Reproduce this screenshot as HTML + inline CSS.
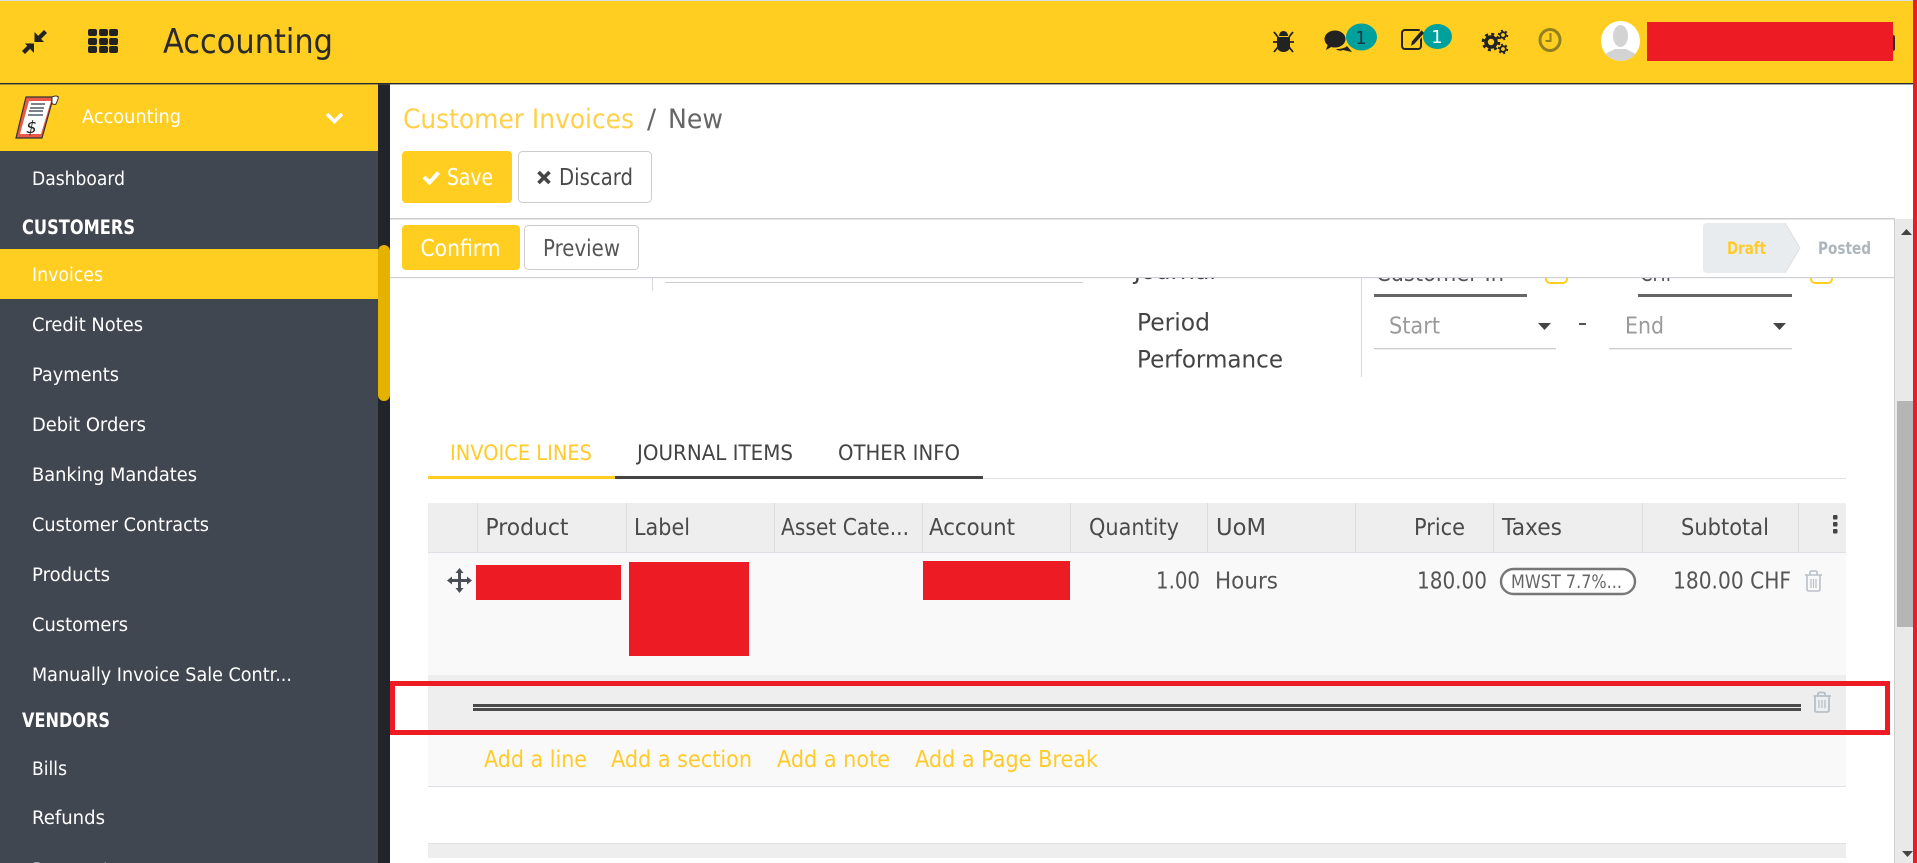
<!DOCTYPE html>
<html lang="en"><head><meta charset="utf-8"><title>Accounting</title>
<style>
html,body{margin:0;padding:0;background:#fff;width:1917px;height:863px;overflow:hidden}
svg{display:block}
text{font-family:"DejaVu Sans","Liberation Sans",sans-serif}
.s{fill:#fff;font-size:18.5px}
.b{fill:#fff;font-size:19.5px;font-weight:bold}
.h{fill:#4a4a4a;font-size:23px}
.r{fill:#555;font-size:23px}
.a{fill:#ffcb2b;font-size:23px}
.t{font-size:21.5px}
</style></head><body>
<svg xmlns="http://www.w3.org/2000/svg" width="1917" height="863" viewBox="0 0 1917 863">
<defs>
<clipPath id="cp"><rect x="390" y="278" width="1505" height="40"/></clipPath>
<clipPath id="av"><ellipse cx="1620.5" cy="41" rx="19.5" ry="20"/></clipPath>
</defs>
<rect width="1917" height="863" fill="#fff"/>

<!-- top bar -->
<rect width="1917" height="83" fill="#ffce21"/>
<rect width="1917" height="1" fill="#ddd"/>
<rect y="83" width="1917" height="1.4" fill="#2a2a2a"/>
<!-- compress icon -->
<g fill="#222">
<path d="M25 43.500h9v9.500z"/>
<path d="M22 51l8-8 3 3-8 8z"/>
<path d="M34.500 32v10h9.500z"/>
<path d="M37 37l7-7 3 3-7 7z"/>
</g>
<!-- grid -->
<g fill="#222">
<rect x="88" y="29" width="9" height="7" rx="2"/><rect x="99" y="29" width="9" height="7" rx="2"/><rect x="109" y="29" width="9" height="7" rx="2"/>
<rect x="88" y="38" width="9" height="7" rx="2"/><rect x="99" y="38" width="9" height="7" rx="2"/><rect x="109" y="38" width="9" height="7" rx="2"/>
<rect x="88" y="46" width="9" height="7" rx="2"/><rect x="99" y="46" width="9" height="7" rx="2"/><rect x="109" y="46" width="9" height="7" rx="2"/>
</g>
<text x="163" y="53" font-size="34" fill="#2a2a2a" textLength="170" lengthAdjust="spacingAndGlyphs">Accounting</text>

<!-- bug -->
<g fill="#222" stroke="#222">
<path d="M1277 37h13v9c0 4-3 6-6.500 6s-6.500-2-6.500-6z" stroke="none"/>
<path d="M1279 36c0-3 2-5 4.500-5s4.500 2 4.500 5z" stroke="none"/>
<path d="M1274 32l4 5M1293 32l-4 5M1273 42h5M1294 42h-5M1274 52l4-5M1293 52l-4-5" stroke-width="1.800" fill="none"/>
</g>
<!-- chat -->
<g fill="#222">
<ellipse cx="1335" cy="39" rx="10.500" ry="8.500"/>
<path d="M1328 44l-2 6 7-4z"/>
<path d="M1336 49c5 0 9-1 11-3l5 6-9-2c-2 1-5 1-7-1z"/>
</g>
<ellipse cx="1361.500" cy="37" rx="15.500" ry="13.500" fill="#00a09d"/>
<text x="1361" y="44" font-size="18" fill="#1f3a44" text-anchor="middle">1</text>
<!-- edit -->
<rect x="1402" y="30" width="19" height="19" rx="3" fill="none" stroke="#222" stroke-width="2"/>
<path d="M1410 47l1.500-6 10-11.500 3.500 3.500-10.500 11.500z" fill="#222" stroke="#ffce21" stroke-width="1.200"/>
<ellipse cx="1437.500" cy="36.500" rx="14.500" ry="12.500" fill="#00a09d"/>
<text x="1437" y="43" font-size="18" fill="#fff" text-anchor="middle">1</text>
<!-- gears -->
<g fill="none" stroke="#222">
<circle cx="1491" cy="42" r="5" stroke-width="3.600"/>
<circle cx="1491" cy="42" r="8" stroke-width="2.600" stroke-dasharray="3 3.280"/>
<circle cx="1503" cy="35" r="2.800" stroke-width="1.800"/>
<circle cx="1503" cy="35" r="4.300" stroke-width="1.800" stroke-dasharray="2 2.500"/>
<circle cx="1503" cy="49" r="2.800" stroke-width="1.800"/>
<circle cx="1503" cy="49" r="4.300" stroke-width="1.800" stroke-dasharray="2 2.500"/>
</g>
<!-- clock -->
<ellipse cx="1550" cy="40" rx="10" ry="10.500" fill="none" stroke="#93801f" stroke-width="3"/>
<path d="M1550.500 33v8h-5" fill="none" stroke="#93801f" stroke-width="2"/>
<!-- avatar -->
<ellipse cx="1620.500" cy="41" rx="19.500" ry="20" fill="#fff"/>
<g clip-path="url(#av)" fill="#d3d3d3">
<ellipse cx="1620.500" cy="36" rx="7.500" ry="11"/>
<path d="M1602 61c1-8 8-9 13-12h11c5 3 12 4 13 12z"/>
</g>
<rect x="1891" y="35" width="4" height="16" rx="2" fill="#2a2a2a"/>
<rect x="1647" y="22" width="246" height="39" fill="#ed1c24"/>

<!-- sidebar -->
<rect y="84.500" width="378" height="778.500" fill="#414750"/>
<rect x="378" y="84.500" width="12" height="778.500" fill="#212529"/>
<rect y="84.500" width="378" height="66.500" fill="#ffce21"/>
<rect y="249" width="378" height="50" fill="#ffce21"/>
<rect x="378" y="245" width="12" height="156" rx="6" fill="#e5b200"/>
<!-- receipt logo -->
<path d="M26 97h32l-2 4-4 1-10 36H16z" fill="#e9594a" stroke="#333" stroke-width="1.200"/>
<path d="M29 101h22l-10 33H20z" fill="#fff"/>
<path d="M52 97c4-2 7-1 6 2l-2 5c-2 1-4 0-4-1z" fill="#fff" stroke="#333"/>
<path d="M31 104h14M30 108h14M29 111h14" stroke="#4f5a66" stroke-width="1.500"/>
<path d="M28 115h15" stroke="#4f5a66" stroke-width="1.500"/>
<text x="26" y="133" font-size="17" fill="#222" font-style="italic">$</text>
<text class="s" x="82" y="123" textLength="99" lengthAdjust="spacingAndGlyphs">Accounting</text>
<path d="M327 114l7.500 7.500 7.500-7.500" fill="none" stroke="#fff" stroke-width="3.600"/>

<text class="s" x="32" y="185" textLength="93" lengthAdjust="spacingAndGlyphs">Dashboard</text>
<text class="b" x="22" y="234" textLength="113" lengthAdjust="spacingAndGlyphs">CUSTOMERS</text>
<text class="s" x="32" y="281" textLength="71" lengthAdjust="spacingAndGlyphs">Invoices</text>
<text class="s" x="32" y="331" textLength="111" lengthAdjust="spacingAndGlyphs">Credit Notes</text>
<text class="s" x="32" y="381" textLength="87" lengthAdjust="spacingAndGlyphs">Payments</text>
<text class="s" x="32" y="431" textLength="114" lengthAdjust="spacingAndGlyphs">Debit Orders</text>
<text class="s" x="32" y="481" textLength="165" lengthAdjust="spacingAndGlyphs">Banking Mandates</text>
<text class="s" x="32" y="531" textLength="177" lengthAdjust="spacingAndGlyphs">Customer Contracts</text>
<text class="s" x="32" y="581" textLength="78" lengthAdjust="spacingAndGlyphs">Products</text>
<text class="s" x="32" y="631" textLength="96" lengthAdjust="spacingAndGlyphs">Customers</text>
<text class="s" x="32" y="681" textLength="260" lengthAdjust="spacingAndGlyphs">Manually Invoice Sale Contr...</text>
<text class="b" x="22" y="727" textLength="88" lengthAdjust="spacingAndGlyphs">VENDORS</text>
<text class="s" x="32" y="775" textLength="35" lengthAdjust="spacingAndGlyphs">Bills</text>
<text class="s" x="32" y="824" textLength="73" lengthAdjust="spacingAndGlyphs">Refunds</text>
<text class="s" x="32" y="876" textLength="87" lengthAdjust="spacingAndGlyphs">Payments</text>

<!-- breadcrumb -->
<text x="403" y="128" font-size="27" fill="#ffd04a" textLength="231" lengthAdjust="spacingAndGlyphs">Customer Invoices</text>
<text x="647" y="128" font-size="27" fill="#666">/</text>
<text x="668" y="128" font-size="27" fill="#666" textLength="55" lengthAdjust="spacingAndGlyphs">New</text>

<!-- buttons -->
<rect x="402" y="151" width="110" height="52" rx="4" fill="#ffce21"/>
<path d="M424 177l5.500 5.500 9-10" fill="none" stroke="#fff" stroke-width="4"/>
<text x="447" y="185" font-size="23" fill="#fff" textLength="46" lengthAdjust="spacingAndGlyphs">Save</text>
<rect x="518.500" y="151.500" width="133" height="51" rx="4" fill="#fff" stroke="#ccc"/>
<path d="M538.500 172l11 11M549.500 172l-11 11" stroke="#444" stroke-width="3.600"/>
<text x="559" y="185" font-size="23" fill="#4a4a4a" textLength="74" lengthAdjust="spacingAndGlyphs">Discard</text>
<rect x="390" y="218" width="1505" height="1.500" fill="#ccc"/>
<rect x="402" y="225" width="118" height="45" rx="4" fill="#ffce21"/>
<text x="420.500" y="256" font-size="23" fill="#fff" textLength="80" lengthAdjust="spacingAndGlyphs">Confirm</text>
<rect x="524.500" y="225.500" width="114" height="44" rx="4" fill="#fff" stroke="#ccc"/>
<text x="543" y="256" font-size="23" fill="#555" textLength="77" lengthAdjust="spacingAndGlyphs">Preview</text>
<!-- status -->
<path d="M1707 223h78l15 25-15 25h-78q-4 0-4-4v-42q0-4 4-4z" fill="#e9ecef"/>
<path d="M1785 223l15 25-15 25" fill="none" stroke="#dcdfe3"/>
<text x="1727" y="254" font-size="17" font-weight="bold" fill="#ffcb2b" textLength="39" lengthAdjust="spacingAndGlyphs">Draft</text>
<text x="1818" y="254" font-size="17" font-weight="bold" fill="#adb5bd" textLength="53" lengthAdjust="spacingAndGlyphs">Posted</text>
<rect x="390" y="277" width="1505" height="1.200" fill="#ced0d6"/>

<!-- clipped form fields -->
<g clip-path="url(#cp)">
<text x="1134" y="279" font-size="23" fill="#444" textLength="82" lengthAdjust="spacingAndGlyphs">Journal</text>
<text x="1376" y="281" font-size="23" fill="#555" textLength="128" lengthAdjust="spacingAndGlyphs">Customer In</text>
<text x="1640" y="281" font-size="23" fill="#555" textLength="36" lengthAdjust="spacingAndGlyphs">CHF</text>
<rect x="1546" y="270" width="21" height="13" rx="4" fill="none" stroke="#ffce21" stroke-width="2"/>
<rect x="1811" y="270" width="21" height="13" rx="4" fill="none" stroke="#ffce21" stroke-width="2"/>
</g>
<rect x="652" y="278" width="1" height="13" fill="#d8d8d8"/>
<rect x="665" y="282" width="418" height="1" fill="#ccc"/>
<rect x="1374" y="294" width="153" height="3" fill="#666"/>
<rect x="1638" y="294" width="154" height="3" fill="#666"/>

<!-- period -->
<text x="1137" y="330.500" font-size="24" fill="#444" textLength="73" lengthAdjust="spacingAndGlyphs">Period</text>
<text x="1137" y="367.500" font-size="24" fill="#444" textLength="146" lengthAdjust="spacingAndGlyphs">Performance</text>
<rect x="1361" y="278" width="1" height="99" fill="#d8d8d8"/>
<text x="1389" y="333.500" font-size="23" fill="#9a9a9a" textLength="51" lengthAdjust="spacingAndGlyphs">Start</text>
<path d="M1538 323h13l-6.500 7z" fill="#444"/>
<rect x="1374" y="348" width="182" height="1.300" fill="#ccc"/>
<rect x="1579" y="323" width="7" height="2" fill="#555"/>
<text x="1625" y="333.500" font-size="23" fill="#9a9a9a" textLength="39" lengthAdjust="spacingAndGlyphs">End</text>
<path d="M1773 323h13l-6.500 7z" fill="#444"/>
<rect x="1609" y="348" width="183" height="1.300" fill="#ccc"/>

<!-- tabs -->
<rect x="428" y="478" width="1418" height="1" fill="#e2e2e8"/>
<rect x="428" y="476" width="187" height="3" fill="#ffce21"/>
<rect x="615" y="476" width="368" height="3" fill="#444"/>
<text class="t" x="450" y="460" fill="#ffcb2b" textLength="142" lengthAdjust="spacingAndGlyphs">INVOICE LINES</text>
<text class="t" x="637" y="460" fill="#444" textLength="156" lengthAdjust="spacingAndGlyphs">JOURNAL ITEMS</text>
<text class="t" x="838" y="460" fill="#444" textLength="122" lengthAdjust="spacingAndGlyphs">OTHER INFO</text>

<!-- table head -->
<rect x="428" y="503" width="1418" height="49" fill="#eee"/>
<rect x="428" y="552" width="1418" height="1" fill="#dfdfe6"/>
<g fill="#dcdcdc">
<rect x="477" y="503" width="1" height="49"/><rect x="626" y="503" width="1" height="49"/><rect x="774" y="503" width="1" height="49"/><rect x="922" y="503" width="1" height="49"/><rect x="1070" y="503" width="1" height="49"/><rect x="1207" y="503" width="1" height="49"/><rect x="1355" y="503" width="1" height="49"/><rect x="1493" y="503" width="1" height="49"/><rect x="1642" y="503" width="1" height="49"/><rect x="1798" y="503" width="1" height="49"/>
</g>
<text class="h" x="485.500" y="535" textLength="83" lengthAdjust="spacingAndGlyphs">Product</text>
<text class="h" x="634" y="535" textLength="56" lengthAdjust="spacingAndGlyphs">Label</text>
<text class="h" x="781" y="535" textLength="128" lengthAdjust="spacingAndGlyphs">Asset Cate...</text>
<text class="h" x="929" y="535" textLength="86" lengthAdjust="spacingAndGlyphs">Account</text>
<text class="h" x="1089" y="535" textLength="90" lengthAdjust="spacingAndGlyphs">Quantity</text>
<text class="h" x="1216" y="535" textLength="50" lengthAdjust="spacingAndGlyphs">UoM</text>
<text class="h" x="1414" y="535" textLength="51" lengthAdjust="spacingAndGlyphs">Price</text>
<text class="h" x="1502" y="535" textLength="60" lengthAdjust="spacingAndGlyphs">Taxes</text>
<text class="h" x="1681" y="535" textLength="88" lengthAdjust="spacingAndGlyphs">Subtotal</text>
<g fill="#444"><rect x="1833" y="515" width="4.500" height="4.500" rx="1"/><rect x="1833" y="522" width="4.500" height="4.500" rx="1"/><rect x="1833" y="529" width="4.500" height="4.500" rx="1"/></g>

<!-- row -->
<rect x="428" y="553" width="1418" height="122" fill="#f9f9f9"/>
<g fill="#4a4f57">
<path d="M459.500 569l4 5h-2.500v6h6v-2.500l5 4-5 4V583h-6v6h2.500l-4 5-4-5h2.500v-6h-6v2.500l-5-4 5-4v2.500h6v-6H455.500z" transform="translate(0,-1)"/>
</g>
<rect x="476" y="565" width="145" height="35" fill="#ed1c24"/>
<rect x="629" y="562" width="120" height="94" fill="#ed1c24"/>
<rect x="923" y="561" width="147" height="39" fill="#ed1c24"/>
<text class="r" x="1156" y="588.500" textLength="44" lengthAdjust="spacingAndGlyphs">1.00</text>
<text class="r" x="1215" y="588.500" textLength="63" lengthAdjust="spacingAndGlyphs">Hours</text>
<text class="r" x="1417" y="588.500" textLength="70" lengthAdjust="spacingAndGlyphs">180.00</text>
<rect x="1501" y="569" width="134" height="25" rx="12.500" fill="#fff" stroke="#777" stroke-width="2.400"/>
<text x="1511" y="588" font-size="18.500" fill="#666" textLength="111" lengthAdjust="spacingAndGlyphs">MWST 7.7%...</text>
<text class="r" x="1673" y="588.500" textLength="118" lengthAdjust="spacingAndGlyphs">180.00 CHF</text>
<!-- trash 1 -->
<g fill="none" stroke="#b9c0c8" stroke-width="1.600">
<path d="M1805 575h17M1810 575v-2.500q0-1.500 1.500-1.500h4q1.500 0 1.500 1.500v2.500M1807 575v14q0 2 2 2h9q2 0 2-2v-14"/>
<path d="M1811 579v9M1813.500 579v9M1816 579v9" stroke-width="1.200"/>
</g>

<!-- section row -->
<rect x="428" y="675" width="1418" height="60" fill="#eee"/>
<rect x="473" y="704" width="1328" height="3" fill="#4a4a4a"/>
<rect x="473" y="708" width="1328" height="3" fill="#4a4a4a"/>
<g fill="none" stroke="#b5c0c8" stroke-width="1.800">
<path d="M1813.500 696h17.500M1818 696v-2q0-1.500 1.500-1.500h4q1.500 0 1.500 1.500v2M1815 696v14q0 2 2 2h10q2 0 2-2v-14"/>
<path d="M1819 700v8M1822 700v8M1825 700v8" stroke-width="1.300"/>
</g>
<rect x="392.500" y="683.500" width="1495" height="49" fill="none" stroke="#ed1c24" stroke-width="5"/>

<!-- add row -->
<rect x="428" y="735" width="1418" height="51" fill="#f9f9f9"/>
<rect x="428" y="786" width="1418" height="1" fill="#dfdfe6"/>
<text class="a" x="484" y="767" textLength="103" lengthAdjust="spacingAndGlyphs">Add a line</text>
<text class="a" x="611" y="767" textLength="141" lengthAdjust="spacingAndGlyphs">Add a section</text>
<text class="a" x="777" y="767" textLength="113" lengthAdjust="spacingAndGlyphs">Add a note</text>
<text class="a" x="915" y="767" textLength="183" lengthAdjust="spacingAndGlyphs">Add a Page Break</text>
<rect x="428" y="843" width="1418" height="1" fill="#e2e2e2"/>
<rect x="428" y="844" width="1418" height="14" fill="#eee"/>

<!-- right scrollbar -->
<rect x="1895" y="219" width="18" height="644" fill="#e9e9e9"/>
<rect x="1894" y="219" width="1" height="644" fill="#cfcfcf"/>
<rect x="1897" y="401" width="16" height="226" fill="#b5b5b5"/>
<path d="M1901 235l5.500-6 5.500 6z" fill="#444"/>
<path d="M1902 851h11l-5.500 6z" fill="#444"/>
<rect x="1913" y="0" width="4" height="863" fill="#ed1c24"/>
</svg>
</body></html>
